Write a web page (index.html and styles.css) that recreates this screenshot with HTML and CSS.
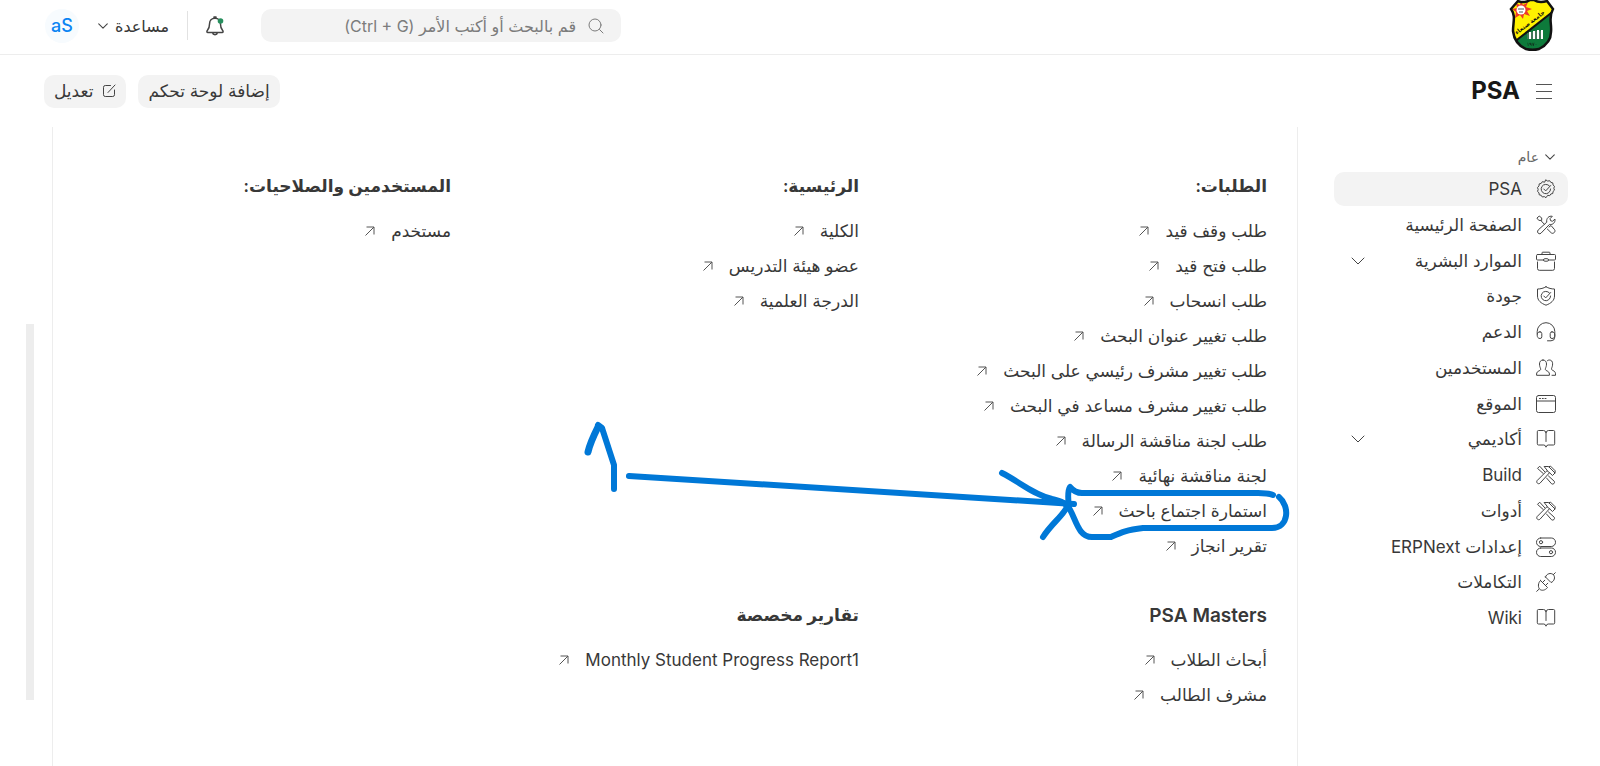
FILE: index.html
```html
<!DOCTYPE html>
<html lang="ar" dir="rtl">
<head>
<meta charset="utf-8">
<title>PSA</title>
<link rel="stylesheet" href="styles.css">
</head>
<body>
<svg class="sprite" aria-hidden="true">
  <symbol id="arrow" viewBox="0 0 10 10"><path d="M.5 9.500 9 1M1.500 1H9v7.500"/></symbol>
  <symbol id="chevron" viewBox="0 0 14 8"><path d="m1 1 6 6 6-6"/></symbol>
  <symbol id="badge" viewBox="0 0 20 20"><path d="m10 1 1.700 1.100 2-.4 1.100 1.700 2 .5.200 2 1.500 1.400-.7 1.900.7 1.900-1.500 1.400-.2 2-2 .5-1.100 1.700-2-.4L10 18.700l-1.700-1.100-2 .4-1.100-1.700-2-.5-.2-2-1.500-1.400.7-1.900-.7-1.900L3 6.900l.2-2 2-.5 1.100-1.700 2 .4z"/><path d="M13.500 7A4.700 4.700 0 1 0 14.600 10M7.800 10l1.900 1.900 5-5.400"/></symbol>
  <symbol id="wrench" viewBox="0 0 20 20"><path d="M10.700 6.800C10 3.300 13 .5 16.300 1.300L14 3.700l.6 2 2 .6 2.300-2.300c.7 3.200-2 6.200-5.400 5.400L5 18.200c-2 1.800-4.800-1-3-3zM8.300 9.200 5 5.700M1.200 2.800l2-1.700 2.500 1.800v2.500H3.200zM13 12l2-1.500 3.600 4.200c1.400 2-1.400 4.700-3.300 3.200L11.300 14"/></symbol>
  <symbol id="case" viewBox="0 0 20 20"><path d="M6 3.500V2q0-.8.8-.8h6.400q.8 0 .8.800v1.500M1.500 3.500h17q1 0 1 1V8q0 1-1 1h-6M7.500 9h-6q-1 0-1-1V4.500q0-1 1-1M6 3.500h8M7.500 9q0-1.300 1.300-1.300h2.400q1.300 0 1.300 1.300 0 1.200-1.300 1.200H8.800Q7.500 10.200 7.500 9M1.500 11v6.500q0 1.800 1.800 1.800h13.400q1.800 0 1.800-1.800V11"/></symbol>
  <symbol id="shield" viewBox="0 0 20 20"><path d="M10 .8C7.500 2.300 4.500 3 1.500 3v7c0 4.500 3.500 7.300 8.500 9.200 5-1.900 8.500-4.700 8.500-9.200V3C15.500 3 12.500 2.300 10 .8z"/><path d="M13.500 7A4.700 4.700 0 1 0 14.600 10M7.800 10l1.900 1.900 5-5.400"/></symbol>
  <symbol id="headset" viewBox="0 0 20 20"><path d="M1.200 12V9.500a8.800 8.800 0 0 1 17.600 0V15q0 3.800-3.800 3.800h-3.500M4 9.800c-2 0-2.800 1.400-2.800 3.300S2 16.500 4 16.500q1.800 0 1.800-1.700v-3.200Q5.800 9.800 4 9.800zM16 9.800c2 0 2.800 1.400 2.800 3.300S18 16.500 16 16.500q-1.800 0-1.800-1.700v-3.200q0-1.800 1.800-1.800z"/></symbol>
  <symbol id="users" viewBox="0 0 20 20"><path d="M7 2c-2.300 0-3.500 1.700-3.500 4 0 2 .6 3.300 1 4.300.5 1.200 0 2-1.300 2.500C1.500 13.500.6 14.500.6 16v1.300h12.800V16c0-1.500-1-2.500-2.600-3.200-1.300-.5-1.800-1.300-1.300-2.500.4-1 1-2.300 1-4.300 0-2.300-1.200-4-3.500-4zM11.500 2.600C12 2.200 12.600 2 13.300 2c2.200 0 3.300 1.500 3.300 3.800 0 2-.5 3.300-.9 4.200-.4 1.200 0 2 1.200 2.500 1.700.7 2.600 1.700 2.600 3.300v1.500H16"/></symbol>
  <symbol id="window" viewBox="0 0 20 20"><rect x=".5" y="1.500" width="19" height="17" rx="2"/><path d="M.5 7h19M3.500 4.500h1M6.300 4.500h1M9 4.500h1"/></symbol>
  <symbol id="book" viewBox="0 0 20 20"><path d="M10 3.500v9M10 3.500Q9.500 1.500 7.500 1.500h-5q-1.200 0-1.200 1.200v12.100q0 1.200 1.200 1.200h5.300q1.700 0 2.200 2.200.5-2.200 2.200-2.200h5.300q1.200 0 1.200-1.200V2.700q0-1.200-1.200-1.200h-5q-2 0-2.500 2z"/></symbol>
  <symbol id="tools" viewBox="0 0 20 20"><path d="M8.500 1.500h4L19 8l-2.500 2.500-3-2.800L4 18.200c-1.800 1.600-4.300-.8-2.800-2.700L11 5.700zM11 5.700l2.500 2M13 1.700l1.500-.6 4.700 4.700L19 8M7.200 8.500 1.500 3.400 3.700 1.200l5 5.500M12.500 11l5.800 5.300c1 1.800-1.200 3.600-2.700 2.500L10.500 13"/></symbol>
  <symbol id="toggles" viewBox="0 0 20 20"><rect x=".5" y="1" width="19" height="8.500" rx="4.200"/><rect x=".5" y="11" width="19" height="8.500" rx="4.200"/><circle cx="5" cy="5.200" r="1.600"/><circle cx="15" cy="15.200" r="1.600"/></symbol>
  <symbol id="plug" viewBox="0 0 20 20"><path d="m19.300.7-2 2M9.500 5l5.500 5.500c3.300-1 4.700-5.500 2.300-7.800S10.500 1.500 9.500 5zM4.500 8.500l7 7c-2.200 3-6 3.500-7.800 1.700S1.800 10.800 4.500 8.500zM6.500 10.500l2.300-2.300M9.500 13.500l2.300-2.300M.7 19.300l2.300-2.100"/></symbol>
</svg>

<header class="navbar">
  <a class="brand" href="#" aria-label="PSA">
    <svg class="crest" viewBox="0 0 46 51">
      <defs><clipPath id="shape"><path d="M9 1c5 2 9 1 12-1h4c3 2 7 3 13 1l6 8c-5 9-1 14-2 23 0 9-6 14-12 17-4 1-9 1-13 0C10 46 5 40 4 31 4 22 7 16 2 9z"/></clipPath></defs>
      <g clip-path="url(#shape)">
        <path fill="#fff200" d="M0 0h46v51H0z"/>
        <path fill="#0d7a3b" d="M46 10v41H8L5 42z"/>
        <path stroke="#111" stroke-width="2" d="M4 43 46 10"/>
        <path fill="#ee3a2b" d="m12 1 2 4 5-3-2 5 6 2-5 2 3 5-6-2-1 5-3-4-5 3 1-6-4-3 5-1-1-5 4 2z"/>
        <circle cx="12" cy="10" r="4.500" fill="#fff"/>
        <path stroke="#555" d="M9 9h6M10 12h4"/>
        <path stroke="#fff" stroke-width="2" d="M21 32v7M25 31v8M29 30v9M33 30v9"/>
        <path stroke="#777" d="M19 33v6M23 32v7M27 31v8M31 31v8"/>
      </g>
      <text class="crest-name" transform="rotate(-37 22 24)" x="22" y="24">جامعة صنعاء</text>
      <text class="crest-year" x="23" y="46">١٩٧٠</text>
      <path fill="none" stroke="#111" stroke-width="2.500" d="M9 1c5 2 9 1 12-1h4c3 2 7 3 13 1l6 8c-5 9-1 14-2 23 0 9-6 14-12 17-4 1-9 1-13 0C10 46 5 40 4 31 4 22 7 16 2 9z"/>
    </svg>
  </a>
  <label class="search">
    <svg class="line search-icon" viewBox="0 0 16 16"><circle cx="7" cy="7" r="6"/><path d="m11.500 11.500 3.500 3.500"/></svg>
    <input type="text" aria-label="بحث" placeholder="قم بالبحث أو أكتب الأمر (Ctrl + G)">
  </label>
  <button class="bell" aria-label="التنبيهات">
    <svg class="line" viewBox="0 0 18 20"><path d="M9 2.200C5.500 2.200 3.600 4.500 3.600 7.500c0 3.500-.8 5.500-2.400 7.300-.5.700-.3 1.700.6 1.700h14.400c.9 0 1.100-1 .6-1.700-1.600-1.800-2.400-3.800-2.400-7.300 0-3-1.900-5.300-5.400-5.300zM8 2.200V1h2v1.200M6.500 16.700q.4 2 2.500 2t2.500-2"/><circle class="dot" cx="14.500" cy="5" r="2.800"/></svg>
  </button>
  <span class="divider"></span>
  <button class="help">مساعدة <svg class="line chev-sm"><use href="#chevron"/></svg></button>
  <button class="avatar">aS</button>
</header>

<div class="page-head">
  <button class="menu" aria-label="القائمة"><svg class="line" viewBox="0 0 16 17"><path d="M0 1.500h16M0 8.500h16M0 15.500h16"/></svg></button>
  <h1>PSA</h1>
  <div class="actions">
    <button class="btn">إضافة لوحة تحكم</button>
    <button class="btn"><svg class="line" viewBox="0 0 14 14"><path d="M8.500 1.500H3.300Q1.500 1.500 1.500 3.300v7.400q0 1.800 1.800 1.800h7.400q1.800 0 1.800-1.800V6M6 8.500 13 1"/></svg>تعديل</button>
  </div>
</div>

<div class="body">
  <nav class="sidebar">
    <button class="group"><svg class="line"><use href="#chevron"/></svg>عام</button>
    <ul>
      <li><a class="active" href="#"><svg class="line"><use href="#badge"/></svg>PSA</a></li>
      <li><a href="#"><svg class="line"><use href="#wrench"/></svg>الصفحة الرئيسية</a></li>
      <li><a href="#"><svg class="line"><use href="#case"/></svg>الموارد البشرية<svg class="line chev"><use href="#chevron"/></svg></a></li>
      <li><a href="#"><svg class="line"><use href="#shield"/></svg>جودة</a></li>
      <li><a href="#"><svg class="line"><use href="#headset"/></svg>الدعم</a></li>
      <li><a href="#"><svg class="line"><use href="#users"/></svg>المستخدمين</a></li>
      <li><a href="#"><svg class="line"><use href="#window"/></svg>الموقع</a></li>
      <li><a href="#"><svg class="line"><use href="#book"/></svg>أكاديمي<svg class="line chev"><use href="#chevron"/></svg></a></li>
      <li><a href="#"><svg class="line"><use href="#tools"/></svg>Build</a></li>
      <li><a href="#"><svg class="line"><use href="#tools"/></svg>أدوات</a></li>
      <li><a href="#"><svg class="line"><use href="#toggles"/></svg>إعدادات ERPNext</a></li>
      <li><a href="#"><svg class="line"><use href="#plug"/></svg>التكاملات</a></li>
      <li><a href="#"><svg class="line"><use href="#book"/></svg>Wiki</a></li>
    </ul>
  </nav>

  <main class="cards">
    <section>
      <h2>الطلبات:</h2>
      <a href="#">طلب وقف قيد<svg class="line"><use href="#arrow"/></svg></a>
      <a href="#">طلب فتح قيد<svg class="line"><use href="#arrow"/></svg></a>
      <a href="#">طلب انسحاب<svg class="line"><use href="#arrow"/></svg></a>
      <a href="#">طلب تغيير عنوان البحث<svg class="line"><use href="#arrow"/></svg></a>
      <a href="#">طلب تغيير مشرف رئيسي على البحث<svg class="line"><use href="#arrow"/></svg></a>
      <a href="#">طلب تغيير مشرف مساعد في البحث<svg class="line"><use href="#arrow"/></svg></a>
      <a href="#">طلب لجنة مناقشة الرسالة<svg class="line"><use href="#arrow"/></svg></a>
      <a href="#">لجنة مناقشة نهائية<svg class="line"><use href="#arrow"/></svg></a>
      <a href="#">استمارة اجتماع باحث<svg class="line"><use href="#arrow"/></svg></a>
      <a href="#">تقرير انجاز<svg class="line"><use href="#arrow"/></svg></a>
    </section>
    <section>
      <h2>الرئيسية:</h2>
      <a href="#">الكلية<svg class="line"><use href="#arrow"/></svg></a>
      <a href="#">عضو هيئة التدريس<svg class="line"><use href="#arrow"/></svg></a>
      <a href="#">الدرجة العلمية<svg class="line"><use href="#arrow"/></svg></a>
    </section>
    <section>
      <h2>المستخدمين والصلاحيات:</h2>
      <a href="#">مستخدم<svg class="line"><use href="#arrow"/></svg></a>
    </section>
    <section>
      <h2 lang="en">PSA Masters</h2>
      <a href="#">أبحاث الطلاب<svg class="line"><use href="#arrow"/></svg></a>
      <a href="#">مشرف الطالب<svg class="line"><use href="#arrow"/></svg></a>
    </section>
    <section>
      <h2>تقارير مخصصة</h2>
      <a href="#">Monthly Student Progress Report1<svg class="line"><use href="#arrow"/></svg></a>
    </section>
  </main>
  <div class="rail"><div class="thumb"></div></div>
</div>

<svg class="ink" viewBox="0 0 720 150" aria-hidden="true">
  <path stroke-width="7" d="M8 32Q10 23 18 7"/>
  <path d="M18 5l4 3 12 37v24"/>
  <path d="M49 56 494 84"/>
  <path d="M422 53C440 62 452 74 472 79Q486 82 487 87C482 97 472 103 463 117"/>
  <path d="M693 75Q688 73 678 73H502q-7 0-12-6-3 4-1 21c7 11 9 29 23 29h19c11-5 15-7 32-9h129c17 0 18-22 7-31"/>
</svg>
</body>
</html>
```
FILE: styles.css
```css
* { box-sizing: border-box; }

body {
  margin: 0;
  min-height: 100vh;
  display: flex;
  flex-direction: column;
  position: relative;
  overflow: hidden;
  background: #fff;
  color: #383838;
  font: 17px/24px Inter, "Noto Sans", "DejaVu Sans", sans-serif;
}

button, input { font: inherit; color: inherit; border: 0; padding: 0; background: none; }
a { color: inherit; text-decoration: none; }
h1, h2, ul { margin: 0; padding: 0; list-style: none; }

.sprite { position: absolute; width: 0; height: 0; }
.line { fill: none; stroke: #444; stroke-width: 1; flex: none; stroke-linecap: round; stroke-linejoin: round; }

.navbar {
  display: flex;
  align-items: center;
  height: 55px;
  padding: 0 45px 3px;
  border-bottom: 1px solid #ededed;
}
.brand { display: block; height: 51px; margin-left: auto; }
.crest { display: block; width: 46px; height: 51px; overflow: visible; }
.crest-name { font-size: 6px; font-weight: 700; text-anchor: middle; fill: #111; }
.crest-year { font-size: 5px; text-anchor: middle; fill: #111; }

.search {
  display: flex;
  align-items: center;
  gap: 12px;
  width: 360px;
  height: 33px;
  padding: 0 17px;
  border-radius: 10px;
  background: #f3f3f3;
  font-size: 16px;
}
.search input { flex: 1; min-width: 0; outline: 0; }
.search input::placeholder { color: #7c7c7c; opacity: 1; }
.search-icon { width: 16px; height: 16px; stroke: #7c7c7c; }

.bell { display: flex; margin-right: 37px; }
.bell svg { width: 18px; height: 20px; stroke-width: 1.500; }
.bell .dot { fill: #278f5e; stroke: none; }
.divider { width: 1px; height: 29px; margin: 0 18px; background: #e2e2e2; }
.help { display: flex; align-items: center; gap: 7px; margin-left: 19px; font-size: 16px; }
.chev-sm { width: 10px; height: 6px; stroke-width: 1.500; }
.avatar { width: 34px; height: 34px; border-radius: 50%; background: #f7fbfe; color: #0b84f3; font-size: 18px; font-weight: 500; }

.page-head { display: flex; align-items: center; height: 72px; padding: 0 48px 0 44px; }
.menu { display: flex; margin-left: 16px; }
.menu svg { width: 16px; height: 17px; stroke: #555; stroke-linecap: butt; }
h1 { font-size: 24px; font-weight: 700; color: #171717; margin-left: auto; }
.actions { display: flex; gap: 12px; }
.btn { display: flex; align-items: center; gap: 9px; height: 33px; padding: 0 10px; border-radius: 10px; background: #f3f3f3; }
.btn svg { width: 14px; height: 14px; }

.body { flex: 1; display: flex; padding-right: 32px; }
.sidebar { width: 234px; padding-top: 20px; margin-left: 36px; }
.group { display: flex; align-items: center; gap: 6px; height: 20px; margin: 0 13px 5px; font-size: 14px; color: #666; }
.group svg { width: 10px; height: 6px; stroke-width: 1.500; }
.sidebar ul { display: flex; flex-direction: column; justify-content: space-between; min-height: 463px; }
.sidebar a { display: flex; align-items: center; gap: 14px; height: 34px; padding: 0 12px 0 17px; border-radius: 10px; }
.sidebar a svg { width: 20px; height: 20px; }
.sidebar a .chev { width: 14px; height: 8px; margin-right: auto; }
.sidebar .active { background: #f3f3f3; }

.cards {
  flex: 1;
  display: grid;
  grid-template-columns: repeat(3, 1fr);
  align-content: start;
  gap: 39px 30px;
  padding: 46px 30px 40px 20px;
  border: solid #ededed;
  border-width: 0 1px;
}
.cards h2 { font-size: 17px; line-height: 27px; font-weight: 600; margin-bottom: 13px; }
.cards h2:lang(en) { font-size: 19px; }
.cards a { display: flex; align-items: center; gap: 16px; height: 35px; white-space: nowrap; }
.cards a svg { width: 10px; height: 10px; stroke: #555; stroke-linecap: butt; stroke-linejoin: miter; }

.rail { width: 52px; padding: 197px 0 0 26px; }
.thumb { width: 8px; height: 376px; margin-right: 18px; background: #ededed; }

.ink { position: absolute; top: 420px; right: 300px; width: 720px; height: 150px; pointer-events: none; fill: none; stroke: #0078d7; stroke-width: 6; stroke-linecap: round; stroke-linejoin: round; }
```
